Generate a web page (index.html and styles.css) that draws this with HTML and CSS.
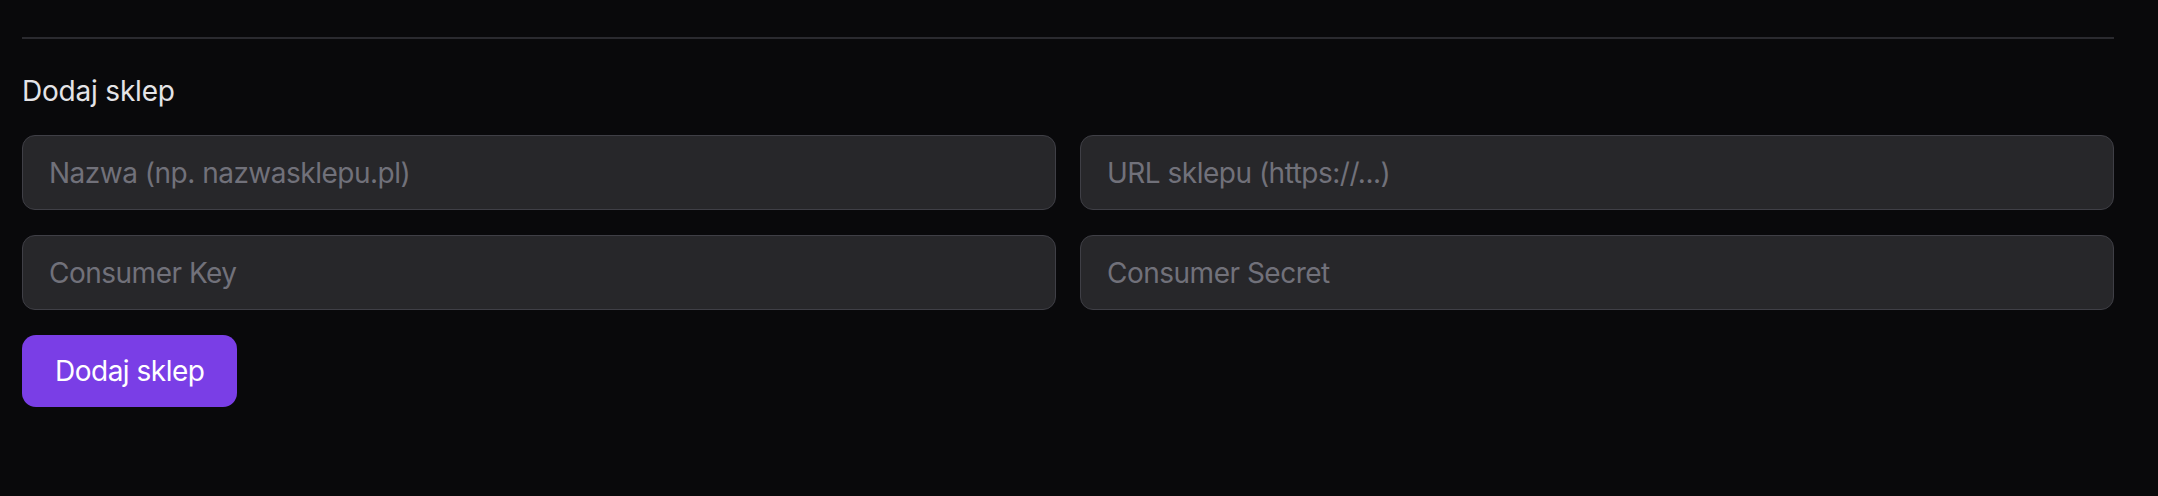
FILE: index.html
```html
<!DOCTYPE html>
<html lang="pl">
<head>
    <meta charset="UTF-8">
    <meta name="viewport" content="width=device-width, initial-scale=1.0">
    <title>Sklepy</title>
    <link rel="stylesheet" href="styles.css">
</head>
<body>
    <div class="page">
        <div class="divider"></div>
        <h2 class="section-title">Dodaj sklep</h2>
        <form class="shop-form" onsubmit="return false">
            <div class="form-grid">
                <input type="text" class="field" placeholder="Nazwa (np. nazwasklepu.pl)">
                <input type="text" class="field" placeholder="URL sklepu (https://...)">
                <input type="text" class="field" placeholder="Consumer Key">
                <input type="text" class="field" placeholder="Consumer Secret">
            </div>
            <button type="submit" class="btn-primary">Dodaj sklep</button>
        </form>
    </div>
</body>
</html>
```

FILE: styles.css
```css
* {
    margin: 0;
    padding: 0;
    box-sizing: border-box;
    font-family: Inter, 'Noto Sans', sans-serif;
}

body {
    background: #09090b;
    height: 100vh;
}

.page {
    padding: 37px 44px 0 22px;
}

.divider {
    height: 2px;
    background: #2a2a2f;
}

.section-title {
    margin-top: 35px;
    margin-bottom: 27px;
    font-size: 28px;
    line-height: 34px;
    font-weight: 400;
    letter-spacing: -0.2px;
    color: #e4e4e7;
}

.form-grid {
    display: grid;
    grid-template-columns: 1fr 1fr;
    gap: 25px 24px;
}

.field {
    height: 75px;
    padding: 0 26px;
    background: #27272a;
    border: 1.5px solid #3f3f46;
    border-radius: 13px;
    font-size: 28px;
    letter-spacing: -0.5px;
    color: #e4e4e7;
    outline: none;
}

.field::placeholder {
    color: #71717a;
}

.btn-primary {
    margin-top: 25px;
    height: 72px;
    padding: 0 33px;
    background: #7a3ee6;
    color: #fff;
    border: none;
    border-radius: 14px;
    font-size: 28px;
    letter-spacing: -0.5px;
    cursor: pointer;
}
```
